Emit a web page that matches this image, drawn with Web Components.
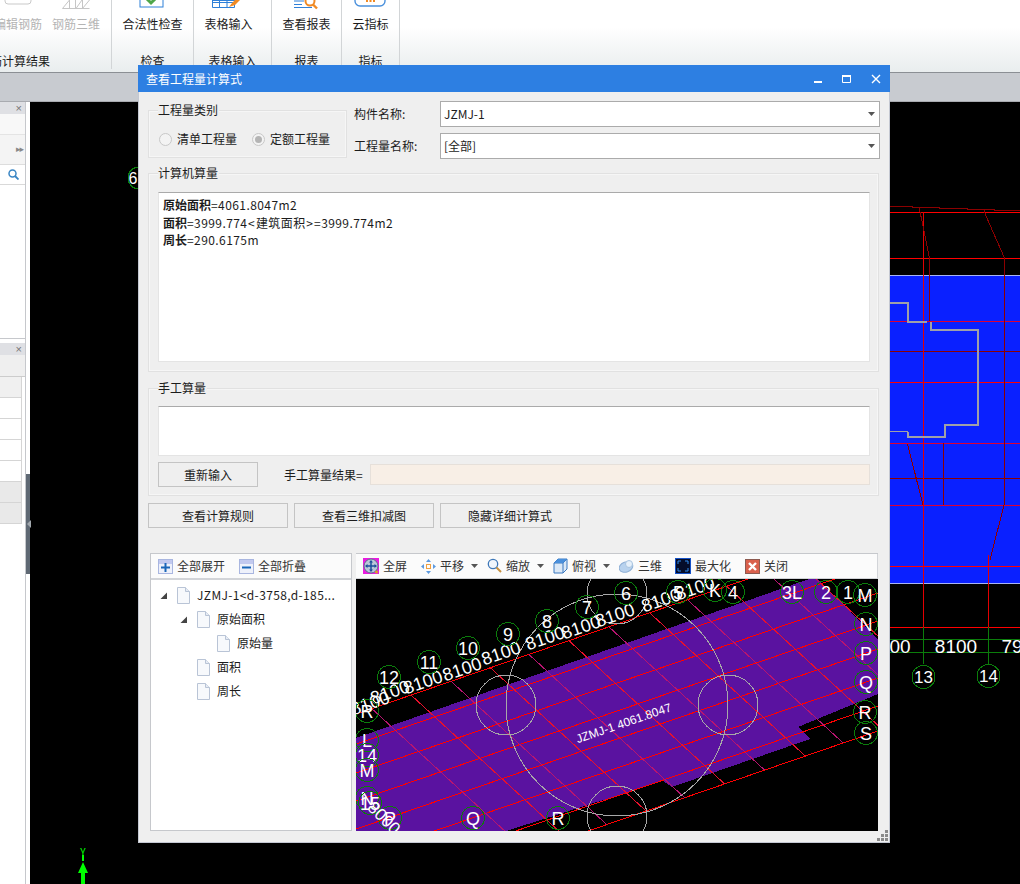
<!DOCTYPE html>
<html lang="zh">
<head>
<meta charset="utf-8">
<title>查看工程量计算式</title>
<style>
  html, body { margin: 0; height: 100%; overflow: hidden; }
  body { font: 12px/16px "Noto Sans CJK SC", "Liberation Sans", sans-serif; color: #1c1c1c; }
</style>
</head>
<body>
<app-shell>
  <app-ribbon slot="ribbon">
    <rb-group label="钢筋计算结果" lead>
      <rb-tool label="编辑钢筋" muted><svg width="28" height="12" viewBox="0 0 28 12"><rect x="1" y="-10" width="26" height="14" rx="3" fill="#fff" stroke="#c9c9c9"/></svg></rb-tool>
      <rb-tool label="钢筋三维" muted><svg width="30" height="12" viewBox="0 0 30 12" fill="none" stroke="#c6c6c6"><path d="M1.500 8.500H28.500M8.500 -2V8.500M21.500 -2V8.500M1.500 8.500L8.500 0M14.500 -2V8.500M21.500 8.500L28.500 0M15 8.500L21 0"/></svg></rb-tool>
    </rb-group>
    <rb-group label="检查">
      <rb-tool label="合法性检查"><svg width="26" height="12" viewBox="0 0 26 12"><rect x="1" y="-8" width="23" height="15" fill="#fff" stroke="#2f80d8"/><path d="M8 -1L12 3L18 -3" fill="none" stroke="#4fa64a" stroke-width="3"/></svg></rb-tool>
    </rb-group>
    <rb-group label="表格输入">
      <rb-tool label="表格输入" style="margin-right:8px"><svg width="34" height="12" viewBox="0 0 34 12"><path d="M1.500 -2H23.500V7.500H1.500ZM1.500 2.500H23.500M8.500 -2V7.500M16 -2V7.500" fill="#fff" stroke="#2f80d8"/><rect x="2" y="-2" width="21" height="3" fill="#2f80d8"/><path d="M18 7L21 3L27 -3L30 -1L24 5Z" fill="#f08a24"/></svg></rb-tool>
    </rb-group>
    <rb-group label="报表">
      <rb-tool label="查看报表"><svg width="26" height="12" viewBox="0 0 26 12"><path d="M1 1H11M1 4.500H9M1 7.500H19" stroke="#2f80d8" fill="none"/><circle cx="17" cy="1" r="4.500" fill="#fff" stroke="#f08a24" stroke-width="2"/><path d="M20 4.500L24 8.500" stroke="#f08a24" stroke-width="2.400"/></svg></rb-tool>
    </rb-group>
    <rb-group label="指标">
      <rb-tool label="云指标"><svg width="32" height="12" viewBox="0 0 32 12"><rect x="1" y="-10" width="30" height="16" rx="5" fill="#fff" stroke="#4a90dc" stroke-width="1.400"/><path d="M13 2V-1M16.500 2V-3M20 2V-1" stroke="#f08a24" stroke-width="2"/></svg></rb-tool>
    </rb-group>
  </app-ribbon>
  <left-dock slot="dock"></left-dock>
  <cad-canvas slot="canvas"></cad-canvas>
  <calc-dialog slot="dialog"></calc-dialog>
</app-shell>

<script>
const DIM_RED = '#8c0000';
const CAD_GREEN = '#0b7d0b';
const TEXT_FONT = '"Liberation Sans", sans-serif';

const ICONS = {
  file: '<svg width="13" height="17" viewBox="0 0 13 17"><path d="M.5.5h8l4 4v12H.5z" fill="#f7f9fc" stroke="#b9c4d6"/><path d="M8.500.5v4h4" fill="#e6ebf4" stroke="#b9c4d6"/></svg>',
  arrow: '<svg width="7" height="7" viewBox="0 0 7 7"><path d="M7 0.500V7H0.500Z" fill="#444"/></svg>',
  caret: '<svg width="7" height="4" viewBox="0 0 7 4"><path d="M0 0H7L3.500 4Z" fill="#555"/></svg>',
  expand: '<svg width="15" height="15" viewBox="0 0 15 15"><rect x=".5" y=".5" width="14" height="14" fill="#eef1fb" stroke="#a9b6e0"/><rect x="1" y="1" width="13" height="4" fill="#c2c9ef"/><path d="M7.500 4v9M3 8.500h9" stroke="#1a66b8" stroke-width="2"/></svg>',
  collapse: '<svg width="15" height="15" viewBox="0 0 15 15"><rect x=".5" y=".5" width="14" height="14" fill="#eef1fb" stroke="#a9b6e0"/><rect x="1" y="1" width="13" height="4" fill="#c2c9ef"/><path d="M3 8.500h9" stroke="#1a66b8" stroke-width="2"/></svg>',
  full: '<svg width="16" height="16" viewBox="0 0 16 16"><rect width="16" height="16" fill="#e91ce0"/><circle cx="8" cy="8" r="7" fill="#b9c6d8" stroke="#5d6f8c"/><path d="M8 3v10M3 8h10" stroke="#1c4f9c" stroke-width="1.500"/><path d="M8 2l2 2.500H6zM8 14l2-2.500H6zM2 8l2.500-2v4zM14 8l-2.500-2v4z" fill="#1c4f9c"/><circle cx="13.500" cy="14" r="1.500" fill="#d9a520"/></svg>',
  pan: '<svg width="15" height="15" viewBox="0 0 15 15"><path d="M7.500 0l2.500 3H5zM7.500 15L5 12h5zM0 7.500L3 5v5zM15 7.500L12 5v5z" fill="#5d9ae0"/><rect x="5.500" y="5.500" width="4" height="4" fill="none" stroke="#f0a040"/></svg>',
  zoom: '<svg width="15" height="16" viewBox="0 0 15 16"><circle cx="6" cy="6" r="4.700" fill="#f0f6fc" stroke="#3f78b8" stroke-width="1.300"/><path d="M9.500 9.500L14 14" stroke="#c69040" stroke-width="2"/></svg>',
  cube: '<svg width="15" height="16" viewBox="0 0 15 16"><path d="M1 5L5 1H14V11L10 15H1Z" fill="#dbe8f6" stroke="#3a78c0"/><path d="M1 5H10V15M10 5L14 1" fill="none" stroke="#3a78c0"/><path d="M1 5L5 1H14L10 5Z" fill="#4a90dc"/></svg>',
  solid: '<svg width="15" height="14" viewBox="0 0 15 14"><ellipse cx="7" cy="8" rx="7" ry="5" transform="rotate(-20 7 8)" fill="#b8d2ee" stroke="#8fb0d6"/><circle cx="10" cy="5" r="3.500" fill="#e6f0fa" stroke="#a8c4e0"/></svg>',
  max: '<svg width="16" height="16" viewBox="0 0 16 16"><rect width="16" height="16" fill="#050d2a"/><rect x=".5" y=".5" width="15" height="15" fill="none" stroke="#1552c8"/><path d="M3 6V3H6M10 3H13V6M13 10V13H10M6 13H3V10" fill="none" stroke="#2f8cf0"/></svg>',
  close: '<svg width="15" height="15" viewBox="0 0 15 15"><rect x=".5" y=".5" width="14" height="14" fill="#d9604c" stroke="#8c5a50"/><path d="M4 4L11 11M11 4L4 11" stroke="#fff" stroke-width="2.400"/></svg>',
};

class AppShell extends HTMLElement {
  constructor() {
    super();
    this.attachShadow({ mode: 'open' }).innerHTML = `
      <style>
        :host { display: block; position: relative; width: 1020px; height: 884px; overflow: hidden; background: #000; }
        .band { height: 28px; background: #c8cbd0; border-bottom: 1px solid #a9abb0; }
        .main { display: flex; height: 782px; }
      </style>
      <slot name="ribbon"></slot>
      <div class="band"></div>
      <div class="main"><slot name="dock"></slot><slot name="canvas"></slot></div>
      <slot name="dialog"></slot>`;
  }
}

class AppRibbon extends HTMLElement {
  constructor() {
    super();
    this.attachShadow({ mode: 'open' }).innerHTML = `
      <style>
        :host {
          display: flex; height: 72px; overflow: hidden; box-sizing: content-box;
          background: linear-gradient(#fff 0, #fff 27px, #e9edee 100%);
          border-bottom: 1px solid #8b8f94;
        }
      </style>
      <slot></slot>`;
  }
}

class RbGroup extends HTMLElement {
  constructor() {
    super();
    this.attachShadow({ mode: 'open' }).innerHTML = `
      <style>
        :host { display: flex; flex-direction: column; height: 69px; border-right: 1px solid #d2d5d7; overflow: hidden; box-sizing: border-box; }
        .tools { display: flex; justify-content: center; gap: 10px; height: 53px; }
        .label { display: flex; justify-content: center; white-space: nowrap; line-height: 16px; }
        :host([lead]) .tools { justify-content: flex-end; padding-right: 11px; }
        :host([lead]) .label { justify-content: flex-end; padding-right: 61px; }
      </style>
      <div class="tools"><slot></slot></div>
      <div class="label"></div>`;
  }
  connectedCallback() {
    this.shadowRoot.querySelector('.label').textContent = this.getAttribute('label');
  }
}

class RbTool extends HTMLElement {
  constructor() {
    super();
    this.attachShadow({ mode: 'open' }).innerHTML = `
      <style>
        :host { display: flex; flex-direction: column; align-items: center; flex: none; }
        .icon { height: 16px; display: flex; align-items: flex-start; }
        .text { line-height: 16px; white-space: nowrap; }
        :host([muted]) .text { color: #b4b4b4; }
      </style>
      <div class="icon"><slot></slot></div>
      <div class="text"></div>`;
  }
  connectedCallback() {
    this.shadowRoot.querySelector('.text').textContent = this.getAttribute('label');
  }
}

class LeftDock extends HTMLElement {
  constructor() {
    super();
    this.attachShadow({ mode: 'open' }).innerHTML = `
      <style>
        :host { display: flex; flex: none; width: 30px; height: 782px; background: #fff; }
        .panel { width: 25px; border-right: 1px solid #c6c8cc; display: flex; flex-direction: column; box-sizing: content-box; }
        .split { flex: 1; display: flex; flex-direction: column; }
        .head { height: 12px; background: #dfe0e4; position: relative; color: #777; font: 11px/12px "Liberation Sans", sans-serif; text-align: right; padding-right: 3px; box-sizing: border-box; flex: none; }
        .tool { height: 21px; background: #f8f8f8; border-bottom: 1px solid #e4e4e4; flex: none; box-sizing: border-box; }
        .more { height: 30px; background: #f4f4f4; border-bottom: 1px solid #ddd; flex: none; box-sizing: border-box; font: 9px/29px "DejaVu Sans", sans-serif; color: #888; text-align: right; letter-spacing: -1px; padding-right: 2px; }
        .search { height: 20px; border-bottom: 1px solid #d9d9d9; flex: none; box-sizing: border-box; display: flex; justify-content: flex-end; align-items: center; padding-right: 6px; }
        .fill { height: 153px; flex: none; border-bottom: 1px solid #c6c8cc; box-sizing: content-box; }
        .gap { height: 4px; flex: none; }
        .sub { height: 21px; background: #efefef; border-bottom: 1px solid #ccc; box-sizing: content-box; flex: none; }
        .row { height: 20px; border-bottom: 1px solid #d5d5d5; box-sizing: content-box; flex: none; border-right: 1px solid #d5d5d5; margin-right: 3px; }
        .row.th { background: #f0f0f0; }
        .row.off { background: #e9e9e9; }
        .grip { height: 100px; margin-top: 372px; background: #5f6974; position: relative; }
        .grip::after { content: ''; position: absolute; left: 1px; top: 46px; border: 4px solid transparent; border-left-width: 0; border-right-color: #a2a8ae; }
      </style>
      <div class="panel">
        <div class="head">×</div>
        <div class="tool"></div>
        <div class="more">▸▸</div>
        <div class="search"><svg width="11" height="11" viewBox="0 0 11 11"><circle cx="4.500" cy="4.500" r="3.500" fill="none" stroke="#3a86c4" stroke-width="1.500"/><path d="M7 7L10.500 10.500" stroke="#3a86c4" stroke-width="1.800"/></svg></div>
        <div class="fill"></div>
        <div class="gap"></div>
        <div class="head">×</div>
        <div class="sub"></div>
        <div class="row th"></div>
        <div class="row"></div><div class="row"></div><div class="row"></div><div class="row"></div>
        <div class="row off"></div><div class="row off"></div>
      </div>
      <div class="split"><div class="grip"></div></div>`;
  }
}

// background drawing, viewBox is in page coordinates
class CadCanvas extends HTMLElement {
  constructor() {
    super();
    const hLine = (y, color, w = 1) => `<path d="M890 ${y}H1020" stroke="${color}" stroke-width="${w}"/>`;
    const tag = (x, y, t) => `<circle cx="${x}" cy="${y}" r="11.500" fill="#000" stroke="${CAD_GREEN}" shape-rendering="crispEdges"/><text x="${x}" y="${y + 6}" class="t" font-size="17">${t}</text>`;
    this.attachShadow({ mode: 'open' }).innerHTML = `
      <style>
        :host { display: block; flex: 1; height: 782px; background: #000; }
        svg { display: block; }
        .t { fill: #fff; text-anchor: middle; font-family: ${TEXT_FONT}; }
      </style>
      <svg width="990" height="782" viewBox="30 102 990 782" shape-rendering="crispEdges">
        <rect x="600" y="275" width="420" height="309" fill="#0a20ff"/>
        <path d="M600 275.500H1020M600 583.500H1020" stroke="#a8b4f4"/>
        <path d="M890 206.500H912V207.500H939V208.500H967V209.500H994V210.500H1020" fill="none" stroke="${DIM_RED}"/>
        ${hLine(212.5, '#f00')}${hLine(258.5, '#f00')}${hLine(321.5, '#e00030')}${hLine(351.5, DIM_RED)}
        ${hLine(382.5, '#f00')}${hLine(443.5, '#e00030')}${hLine(478.5, DIM_RED)}${hLine(505.5, '#e00030')}
        ${hLine(566.5, '#f00')}${hLine(627.5, '#f00')}
        <path d="M923.500 212V627M988.500 555V627" stroke="#e40000" fill="none"/>
        <path d="M1004.500 258V505M929.500 258V321M943.500 443V505" stroke="${DIM_RED}" fill="none"/>
        <path d="M919 207L923 226L929.500 258M984 210L986 216L1004.500 258M907.500 444L923 505M1004 505L990 560" fill="none" stroke="${DIM_RED}"/>
        <path d="M890 303H908V322H927M931 322V330H978V425H945V437H908V431.500" fill="none" stroke="#a0a0a8" stroke-width="2"/>
        <path d="M890 431.500H908" stroke="#a0a0a8"/>
        <path d="M923.500 627V664M988.500 627V664M890 639.500H1020M890 652.500H1020" stroke="${CAD_GREEN}" fill="none"/>
        <g shape-rendering="auto">
          <text x="900" y="653" class="t" font-size="19">00</text>
          <text x="956" y="653" class="t" font-size="19">8100</text>
          <text x="1012" y="653" class="t" font-size="19">79</text>
          ${tag(923.5, 677, '13')}${tag(988.5, 676, '14')}
          <circle cx="139" cy="178" r="11" fill="none" stroke="${CAD_GREEN}" shape-rendering="crispEdges"/>
          <text x="133" y="184" class="t" font-size="16">6</text>
          <text x="83" y="856" fill="#00ff00" font-size="10" text-anchor="middle" font-family="${TEXT_FONT}">Y</text>
          <path d="M83 855V861" stroke="#00ff00" stroke-width="2"/>
          <path d="M83 862L88 873H85V884H81V873H78Z" fill="#00ff00"/>
        </g>
      </svg>`;
  }
}

class GroupBox extends HTMLElement {
  constructor() {
    super();
    this.attachShadow({ mode: 'open' }).innerHTML = `
      <style>
        :host { display: block; position: relative; box-sizing: border-box; border: 1px solid #e1e1e1; box-shadow: inset 0 0 0 1px #f6f6f6; }
        .legend { position: absolute; left: 9px; top: -10px; line-height: 18px; background: #efefef; padding-right: 1px; }
      </style>
      <div class="legend"></div>
      <slot></slot>`;
  }
  connectedCallback() {
    this.shadowRoot.querySelector('.legend').textContent = this.getAttribute('legend');
  }
}

class ComboBox extends HTMLElement {
  constructor() {
    super();
    this.attachShadow({ mode: 'open' }).innerHTML = `
      <style>
        :host { display: flex; align-items: center; gap: 0; }
        label { width: 86px; flex: none; }
        .box { flex: 1; height: 26px; box-sizing: border-box; background: #fff; border: 1px solid #ababab; display: flex; align-items: center; justify-content: space-between; padding: 0 4px 0 3px; }
      </style>
      <label></label>
      <div class="box"><span class="value"></span>${ICONS.caret}</div>`;
  }
  connectedCallback() {
    this.shadowRoot.querySelector('label').textContent = this.getAttribute('label');
    this.shadowRoot.querySelector('.value').textContent = this.getAttribute('value');
  }
}

class DlgButton extends HTMLElement {
  constructor() {
    super();
    this.attachShadow({ mode: 'open' }).innerHTML = `
      <style>
        :host { display: flex; align-items: center; justify-content: center; box-sizing: border-box; height: 25px; background: #efefef; border: 1px solid #c4c4c4; flex: none; }
      </style>
      <slot></slot>`;
  }
}

class ToolButton extends HTMLElement {
  constructor() {
    super();
    this.attachShadow({ mode: 'open' }).innerHTML = `
      <style>
        :host { display: flex; align-items: center; gap: 4px; height: 22px; flex: none; color: #333; }
        :host([menu]) { margin-right: -5px; }
        .icon { display: flex; }
        .text { white-space: nowrap; }
        .caret { display: flex; margin-left: 3px; }
      </style>
      <div class="icon"><slot></slot></div>
      <span class="text"></span>`;
  }
  connectedCallback() {
    this.shadowRoot.querySelector('.text').textContent = this.getAttribute('label');
    if (this.hasAttribute('menu')) {
      const caret = document.createElement('span');
      caret.className = 'caret';
      caret.innerHTML = ICONS.caret;
      this.shadowRoot.appendChild(caret);
    }
  }
}

class FileTree extends HTMLElement {
  constructor() {
    super();
    const rows = [
      { depth: 0, open: true, text: 'JZMJ-1&lt;d-3758,d-185...', wide: true },
      { depth: 1, open: true, text: '原始面积' },
      { depth: 2, text: '原始量' },
      { depth: 1, text: '面积' },
      { depth: 1, text: '周长' },
    ];
    const rowMarkup = rows.map((row) => `
      <div class="row" style="padding-left:${8 + row.depth * 20}px">
        <span class="twist">${row.open ? ICONS.arrow : ''}</span>${ICONS.file}<span class="text${row.wide ? ' wide' : ''}">${row.text}</span>
      </div>`).join('');
    this.attachShadow({ mode: 'open' }).innerHTML = `
      <style>
        :host { display: block; width: 202px; height: 278px; box-sizing: border-box; background: #fff; border: 1px solid #c6c8cc; flex: none; }
        .bar { display: flex; gap: 14px; padding-left: 7px; height: 24px; border-bottom: 2px solid #d2d4d8; background: #fbfbfb; box-sizing: content-box; align-items: center; }
        .list { padding-top: 3px; }
        .row { display: flex; align-items: center; height: 24px; white-space: nowrap; }
        .twist { width: 18px; flex: none; display: flex; padding-left: 1px; box-sizing: border-box; }
        .text { margin-left: 7px; }
        .wide { letter-spacing: .36px; }
      </style>
      <div class="bar">
        <tool-button label="全部展开">${ICONS.expand}</tool-button>
        <tool-button label="全部折叠">${ICONS.collapse}</tool-button>
      </div>
      <div class="list">${rowMarkup}</div>`;
  }
}

// 3d preview of the selected slab, viewBox is in page coordinates
class ModelViewer extends HTMLElement {
  constructor() {
    super();
    const slope = 0.345;
    const startYs = [623, 653, 682, 710, 738, 767, 795, 820];
    const gridX = [232, 286, 341, 395, 448, 503, 558, 614, 666, 720, 775, 817];
    const longLines = startYs.map((y) => {
      const x1 = 340;
      const x2 = 890;
      const y1 = y + slope * (620 - x1);
      const y2 = y - slope * (x2 - 620);
      return `<line x1="${x1}" y1="${y1}" x2="${x2}" y2="${y2}" stroke="#f00"/>`;
    }).join('');
    const crossLines = gridX.map((x0, i) => {
      const top = (256.9 + 0.92 * x0) / 1.265;
      const bottom = (453.9 + 0.92 * x0) / 1.265;
      return `<line x1="${top}" y1="${580 + 0.92 * (top - x0)}" x2="${bottom}" y2="${580 + 0.92 * (bottom - x0)}" stroke="${i % 2 ? '#e8102c' : '#b81470'}"/>`;
    }).join('');
    const dims = [[392, 698], [425, 688], [464, 675], [503, 659], [547, 644], [583, 633], [617, 621], [663, 606], [697, 594], [372, 709]]
      .map(([x, y]) => `<text x="${x}" y="${y}" class="t" font-size="18" transform="rotate(-19 ${x} ${y})">8100</text>`)
      .join('');
    const tags = [
      [389, 677, '12'], [429, 662, '11'], [468, 648, '10'], [508, 634, '9'], [547, 621, '8'], [587, 607, '7'], [626, 593, '6'],
      [678, 592, '5'], [715, 590, 'K'], [733, 592, '4'], [792, 592, '3L'], [826, 592, '2'], [848, 592, '1'], [865, 595, 'M'],
      [866, 624, 'N'], [866, 653, 'P'], [866, 682, 'Q'], [865, 712, 'R'], [866, 733, 'S'],
      [367, 711, 'R'], [367, 740, 'L'], [367, 755, '14'], [367, 770, 'M'], [367, 798, 'N'], [370, 803, '15'],
      [390, 818, 'P'], [473, 818, 'Q'], [558, 818, 'R'],
    ].map(([x, y, t]) => `<circle cx="${x}" cy="${y}" r="11.500" fill="none" stroke="${CAD_GREEN}" shape-rendering="crispEdges"/><text x="${x}" y="${y + 6.5}" class="t" font-size="18">${t}</text>`).join('');
    this.attachShadow({ mode: 'open' }).innerHTML = `
      <style>
        :host { display: block; width: 522px; height: 278px; box-sizing: border-box; border-top: 1px solid #c6c8cc; flex: none; background: #000; }
        .bar { display: flex; align-items: center; gap: 14px; height: 24px; padding-left: 7px; background: #fbfbfb; border-bottom: 1px solid #d2d4d8; border-right: 1px solid #d2d4d8; box-sizing: content-box; width: 514px; }
        svg.view { display: block; }
        .t { fill: #fff; text-anchor: middle; font-family: ${TEXT_FONT}; }
      </style>
      <div class="bar">
        <tool-button label="全屏">${ICONS.full}</tool-button>
        <tool-button label="平移" menu>${ICONS.pan}</tool-button>
        <tool-button label="缩放" menu>${ICONS.zoom}</tool-button>
        <tool-button label="俯视" menu>${ICONS.cube}</tool-button>
        <tool-button label="三维">${ICONS.solid}</tool-button>
        <tool-button label="最大化" style="margin-left:-1px">${ICONS.max}</tool-button>
        <tool-button label="关闭">${ICONS.close}</tool-button>
      </div>
      <svg class="view" width="522" height="252" viewBox="356 579 522 252">
        <g shape-rendering="crispEdges">
          <path d="M356 738L812 578L817 579L878 640V694L798 727L810 739L672 787L663 781L506 831H356Z" fill="#5a12a0"/>
          ${longLines}${crossLines}
          <g fill="none" stroke="#a8a8a8">
            <circle cx="617" cy="705" r="111"/>
            <circle cx="506" cy="705" r="30"/>
            <circle cx="728" cy="705" r="30"/>
            <circle cx="617" cy="594" r="30"/>
            <circle cx="617" cy="816" r="30"/>
          </g>
        </g>
        ${dims}${tags}
        <text x="625" y="727" class="t" font-size="12" transform="rotate(-19 625 727)">JZMJ-1 4061.8047</text>
        <text x="380" y="822" class="t" font-size="17" transform="rotate(45 380 822)">8000</text>
      </svg>`;
  }
}

class CalcDialog extends HTMLElement {
  constructor() {
    super();
    this.attachShadow({ mode: 'open' }).innerHTML = `
      <style>
        :host {
          display: block; position: absolute; left: 138px; top: 65px; width: 752px; height: 778px; box-sizing: border-box;
          background: #efefef; border: solid #c4c8d2; border-width: 0 1px 1px 1px;
        }
        .title { display: flex; align-items: center; justify-content: space-between; height: 27px; margin: 0 -1px; padding: 0 7px 0 8px; background: #2d7fe2; color: #fff; }
        .win { display: flex; gap: 14px; align-items: center; }
        .body { padding: 9px 9px 0 9px; }
        .top { display: flex; gap: 7px; }
        .kind { width: 199px; height: 48px; margin-top: 9px; flex: none; }
        .radios { display: flex; gap: 15px; padding: 20px 0 0 10px; }
        .radio { display: flex; align-items: center; gap: 5px; white-space: nowrap; line-height: 16px; }
        .dot { width: 11px; height: 11px; border: 1px solid #c8c8c8; border-radius: 50%; box-sizing: content-box; background: #f3f3f3; position: relative; }
        .dot.on::after { content: ''; position: absolute; inset: 2px; border-radius: 50%; background: #b4b4b4; }
        .fields { flex: 1; display: flex; flex-direction: column; gap: 6px; }
        .calc { margin-top: 14px; height: 199px; padding: 18px 8px 0 9px; margin-right: 1px; }
        .area { background: #fff; border: 1px solid #e4e4e4; border-top-color: #aaa; box-sizing: border-box; width: 712px; }
        .calc .area { height: 170px; padding: 3px 4px; line-height: 17.500px; letter-spacing: .42px; }
        b { font-weight: 700; letter-spacing: 0; }
        .op { margin: 0 .7px; }
        .hand { margin-top: 16px; height: 108px; padding: 17px 8px 0 9px; margin-right: 1px; }
        .hand .area { height: 50px; }
        .result { display: flex; align-items: center; margin-top: 6px; }
        .result dlg-button { width: 100px; }
        .result span { margin-left: 26px; width: 86px; }
        .field { width: 500px; height: 21px; box-sizing: border-box; background: #f8efe6; border: 1px solid #e6e0da; }
        .actions { display: flex; gap: 6px; margin-top: 7px; }
        .actions dlg-button { width: 140px; }
        .lower { display: flex; gap: 4px; margin: 25px 0 0 2px; }
        .grip { position: absolute; right: 1px; bottom: 1px; }
      </style>
      <div class="title">
        <span>查看工程量计算式</span>
        <div class="win">
          <svg width="14" height="12" viewBox="0 0 14 12"><rect x="1" y="8" width="8" height="2" fill="#fff"/></svg>
          <svg width="14" height="12" viewBox="0 0 14 12"><path d="M1.500 2.500H9.500V9.500H1.500Z" fill="none" stroke="#fff"/><rect x="1" y="2" width="9" height="2" fill="#fff"/></svg>
          <svg width="14" height="12" viewBox="0 0 14 12"><path d="M3 2L11 10M11 2L3 10" stroke="#fff" stroke-width="1.400"/></svg>
        </div>
      </div>
      <div class="body">
        <div class="top">
          <group-box class="kind" legend="工程量类别">
            <div class="radios">
              <div class="radio"><i class="dot"></i>清单工程量</div>
              <div class="radio"><i class="dot on"></i>定额工程量</div>
            </div>
          </group-box>
          <div class="fields">
            <combo-box label="构件名称:" value="JZMJ-1"></combo-box>
            <combo-box label="工程量名称:" value="[全部]"></combo-box>
          </div>
        </div>
        <group-box class="calc" legend="计算机算量">
          <div class="area">
            <div><b>原始面积</b>=4061.8047m2</div>
            <div><b>面积</b>=3999.774<span class="op">&lt;</span>建筑面积<span class="op">&gt;</span>=3999.774m2</div>
            <div><b>周长</b>=290.6175m</div>
          </div>
        </group-box>
        <group-box class="hand" legend="手工算量">
          <div class="area"></div>
          <div class="result">
            <dlg-button>重新输入</dlg-button>
            <span>手工算量结果=</span>
            <div class="field"></div>
          </div>
        </group-box>
        <div class="actions">
          <dlg-button>查看计算规则</dlg-button>
          <dlg-button>查看三维扣减图</dlg-button>
          <dlg-button>隐藏详细计算式</dlg-button>
        </div>
        <div class="lower">
          <file-tree></file-tree>
          <model-viewer></model-viewer>
        </div>
      </div>
      <svg class="grip" width="11" height="11" viewBox="0 0 11 11" fill="#8a8a8a"><path d="M8 0h3v3H8zM4 4h3v3H4zM8 4h3v3H8zM0 8h3v3H0zM4 8h3v3H4zM8 8h3v3H8z"/></svg>`;
  }
}

customElements.define('tool-button', ToolButton);
customElements.define('dlg-button', DlgButton);
customElements.define('group-box', GroupBox);
customElements.define('combo-box', ComboBox);
customElements.define('file-tree', FileTree);
customElements.define('model-viewer', ModelViewer);
customElements.define('calc-dialog', CalcDialog);
customElements.define('cad-canvas', CadCanvas);
customElements.define('left-dock', LeftDock);
customElements.define('rb-tool', RbTool);
customElements.define('rb-group', RbGroup);
customElements.define('app-ribbon', AppRibbon);
customElements.define('app-shell', AppShell);

document.querySelectorAll('rb-group').forEach((group, i) => {
  group.style.width = [112, 82, 78, 70, 58][i] + 'px';
});
</script>
</body>
</html>
